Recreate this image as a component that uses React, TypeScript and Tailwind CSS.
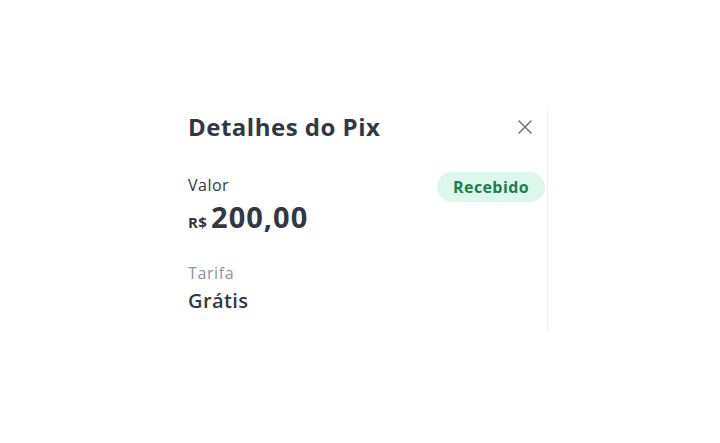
import React from 'react';
import { X } from 'lucide-react';

const App = () => {
  return (
    <div className="w-[720px] h-[443px] bg-white font-['Open_Sans',sans-serif] text-[#303943]">
      <div className="ml-[188px] pt-[110px]">
        <div className="w-[360px] h-[222px] border-r border-[#eeeff1] pr-[2px]">
          <div className="flex items-center justify-between h-[34px]">
            <h1 className="text-[24px] font-bold leading-none tracking-[0.5px]">Detalhes do Pix</h1>
            <button className="mr-[8px] text-[#6b7480]">
              <X className="w-[24px] h-[24px]" strokeWidth={1.5} />
            </button>
          </div>
          <div className="mt-[31px] flex justify-between items-start">
            <div>
              <div className="text-[16px] leading-5 tracking-[0.5px]">Valor</div>
              <div className="mt-[6px] flex items-baseline gap-[4px] font-bold">
                <span className="text-[15px] tracking-[0.3px]">R$</span>
                <span className="text-[29px] leading-8 tracking-[1px]">200,00</span>
              </div>
            </div>
            <span className="mt-[-3px] rounded-full bg-[#dcf8ec] px-[16px] h-[30px] flex items-center text-[16px] font-bold tracking-[0.4px] text-[#1d7d4e]">
              Recebido
            </span>
          </div>
          <div className="mt-[29px]">
            <div className="text-[16px] leading-5 tracking-[0.6px] text-[#8b95a0]">Tarifa</div>
            <div className="mt-[6px] text-[20px] font-semibold leading-6 tracking-[0.4px]">Grátis</div>
          </div>
        </div>
      </div>
    </div>
  );
};

export default App;
